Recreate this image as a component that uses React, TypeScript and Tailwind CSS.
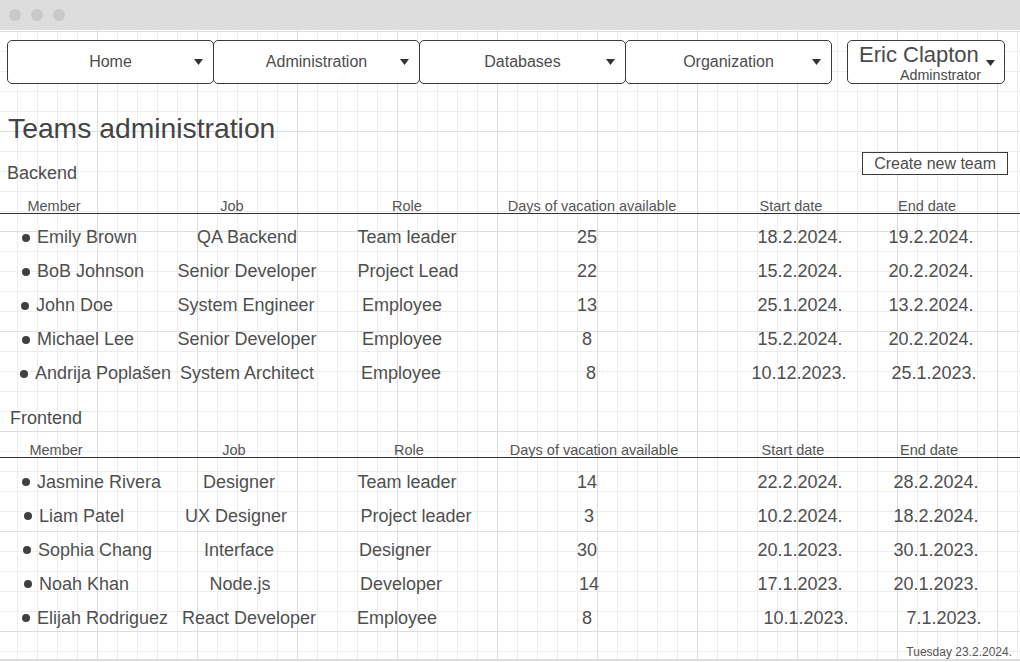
import React from "react";

const font = { fontFamily: '"Liberation Sans", Arial, sans-serif' };

function Arrow() {
  return (
    <svg width="9" height="6" viewBox="0 0 9 6" className="block">
      <polygon points="0,0 9,0 4.5,6" fill="#333333" />
    </svg>
  );
}

function NavBox({ label, first }: { label: string; first?: boolean }) {
  return (
    <div
      className={
        (first ? "" : "-ml-px ") +
        "relative flex h-[44px] w-[207px] items-center justify-center rounded-[5px] border border-[#3a3a3a] bg-white text-[16px] text-[#4d4d4d]"
      }
    >
      <span>{label}</span>
      <div className="absolute right-[10px] top-[18px]">
        <Arrow />
      </div>
    </div>
  );
}

type Row = {
  name: string;
  pad: string;
  job: string;
  jobC?: string;
  role: string;
  roleC?: string;
  days: string;
  daysC?: string;
  start: string;
  startC?: string;
  end: string;
  endC?: string;
};

const backend: Row[] = [
  { name: "Emily Brown", pad: "pl-[22px]", job: "QA Backend", role: "Team leader", roleC: "ml-[6px]", days: "25", start: "18.2.2024.", end: "19.2.2024." },
  { name: "BoB Johnson", pad: "pl-[22px]", job: "Senior Developer", role: "Project Lead", roleC: "ml-[8px]", days: "22", start: "15.2.2024.", end: "20.2.2024." },
  { name: "John Doe", pad: "pl-[21px]", job: "System Engineer", jobC: "-ml-[2px]", role: "Employee", roleC: "-ml-[4px]", days: "13", start: "25.1.2024.", end: "13.2.2024." },
  { name: "Michael Lee", pad: "pl-[22px]", job: "Senior Developer", role: "Employee", roleC: "-ml-[4px]", days: "8", start: "15.2.2024.", end: "20.2.2024." },
  { name: "Andrija Poplašen", pad: "pl-[20px]", job: "System Architect", role: "Employee", roleC: "-ml-[6px]", days: "8", daysC: "ml-[8px]", start: "10.12.2023.", startC: "-ml-[2px]", end: "25.1.2023.", endC: "ml-[6px]" },
];

const frontend: Row[] = [
  { name: "Jasmine Rivera", pad: "pl-[22px]", job: "Designer", jobC: "-ml-[4px]", role: "Team leader", roleC: "ml-[8px]", days: "14", start: "22.2.2024.", end: "28.2.2024." },
  { name: "Liam Patel", pad: "pl-[24px]", job: "UX Designer", jobC: "-ml-[10px]", role: "Project leader", roleC: "ml-[26px]", days: "3", daysC: "ml-[4px]", start: "10.2.2024.", end: "18.2.2024." },
  { name: "Sophia Chang", pad: "pl-[23px]", job: "Interface", jobC: "-ml-[4px]", role: "Designer", roleC: "-ml-[16px]", days: "30", start: "20.1.2023.", end: "30.1.2023." },
  { name: "Noah Khan", pad: "pl-[24px]", job: "Node.js", jobC: "-ml-[2px]", role: "Developer", roleC: "-ml-[4px]", days: "14", daysC: "ml-[4px]", start: "17.1.2023.", end: "20.1.2023." },
  { name: "Elijah Rodriguez", pad: "pl-[22px]", job: "React Developer", jobC: "ml-[16px]", role: "Employee", roleC: "-ml-[12px]", days: "8", start: "10.1.2023.", startC: "ml-[12px]", end: "7.1.2023.", endC: "ml-[16px]" },
];

function Header({ front }: { front?: boolean }) {
  const cells: [string, string][] = [
    ["Member", "w-[108px]"],
    ["Job", "w-[248px]"],
    ["Role", "w-[102px]"],
    ["Days of vacation available", "w-[268px]"],
    ["Start date", "w-[130px]"],
    ["End date", "w-[142px]"],
  ];
  return (
    <div
      className={
        "flex items-end border-b border-[#333333] text-[14.5px] leading-[14px] text-[#555555] " +
        (front ? "h-[31px] pl-[2px]" : "h-[32px]")
      }
    >
      {cells.map(([t, w]) => (
        <div key={t} className={"flex justify-center whitespace-nowrap " + w}>
          <span>{t}</span>
        </div>
      ))}
    </div>
  );
}

function DataRow({ r, front }: { r: Row; front?: boolean }) {
  const w = front
    ? ["w-[132px]", "w-[192px]", "w-[176px]", "w-[250px]", "w-[22px]"]
    : ["w-[144px]", "w-[170px]", "w-[196px]", "w-[230px]", "w-[32px]"];
  const cells: [string, string | undefined][] = [
    [r.job, r.jobC],
    [r.role, r.roleC],
    [r.days, r.daysC],
    [r.start, r.startC],
    [r.end, r.endC],
  ];
  return (
    <div className="flex h-[34px] items-center text-[18px] text-[#4f4f4f]">
      <div className={"flex w-[175px] items-center gap-[7px] whitespace-nowrap " + r.pad}>
        <span className="block h-[8px] w-[8px] rounded-full bg-[#404040]" />
        <span>{r.name}</span>
      </div>
      {cells.map(([t, c], i) => (
        <div key={i} className={"flex justify-center whitespace-nowrap " + w[i]}>
          <span className={c ?? ""}>{t}</span>
        </div>
      ))}
    </div>
  );
}

export default function App() {
  return (
    <div style={font} className="flex h-[662px] w-[1020px] flex-col overflow-hidden bg-white">
      <div className="flex h-[30px] shrink-0 items-center gap-[10px] bg-[#dddddd] pl-[9px]">
        <span className="block h-[12px] w-[12px] rounded-full bg-[#c9c9c9]" />
        <span className="block h-[12px] w-[12px] rounded-full bg-[#c9c9c9]" />
        <span className="block h-[12px] w-[12px] rounded-full bg-[#c9c9c9]" />
      </div>
      <div className="flex h-[629px] flex-col bg-white bg-[linear-gradient(to_right,#dedede_1px,transparent_1px),linear-gradient(to_bottom,#dedede_1px,transparent_1px),linear-gradient(to_right,#ededed_1px,transparent_1px),linear-gradient(to_bottom,#ededed_1px,transparent_1px)] bg-[size:100px_100px,100px_100px,20px_20px,20px_20px] bg-[position:97px_1px,97px_1px,17px_1px,17px_1px]">
        <div className="flex items-start px-[7px] pt-[10px]">
          <NavBox label="Home" first />
          <NavBox label="Administration" />
          <NavBox label="Databases" />
          <NavBox label="Organization" />
          <div className="ml-[15px] flex h-[44px] w-[158px] items-start rounded-[5px] border border-[#3a3a3a] bg-white pl-[11px] pt-[2px] text-[#4a4a4a]">
            <div className="flex w-[122px] flex-col">
              <span className="text-[22px] leading-[24px] whitespace-nowrap">Eric Clapton</span>
              <span className="mt-[1px] self-end text-[14.3px] leading-[14px]">Adminstrator</span>
            </div>
            <div className="ml-[5px] mt-[17px]">
              <Arrow />
            </div>
          </div>
        </div>

        <div className="mt-[29px] pl-[8px] text-[28.3px] leading-[30px] text-[#444444]">Teams administration</div>

        <div className="flex items-start">
          <div className="mt-[20px] pl-[7px] text-[18px] leading-[20px] text-[#4d4d4d]">Backend</div>
          <div className="ml-auto mr-[12px] mt-[9px] flex h-[23px] items-center border border-[#3a3a3a] bg-white px-[11px] text-[16px] text-[#4d4d4d]">
            Create new team
          </div>
        </div>

        <Header />
        <div className="mt-[7px] flex flex-col">
          {backend.map((r) => (
            <DataRow key={r.name} r={r} />
          ))}
        </div>

        <div className="mt-[17px] pl-[10px] text-[18px] leading-[20px] text-[#4d4d4d]">Frontend</div>
        <Header front />
        <div className="mt-[7px] flex flex-col">
          {frontend.map((r) => (
            <DataRow key={r.name} r={r} front />
          ))}
        </div>

        <div className="mt-[10px] self-end pr-[8px] text-[12px] leading-[14px] text-[#555555]">Tuesday 23.2.2024.</div>
      </div>
      <div className="h-[2px] bg-[#dddddd]" />
    </div>
  );
}
